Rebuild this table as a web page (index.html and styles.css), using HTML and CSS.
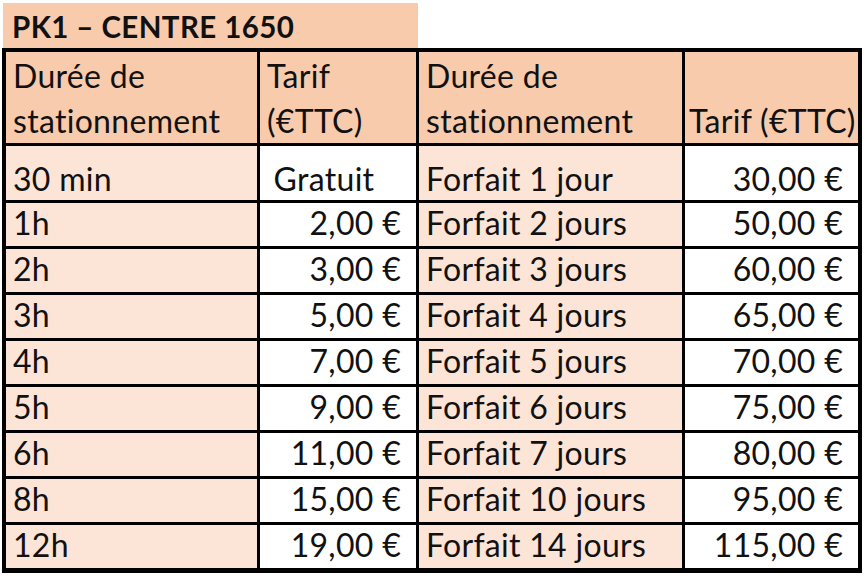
FILE: index.html
```html
<!DOCTYPE html>
<html lang="fr">
<head>
<meta charset="utf-8">
<title>PK1 – CENTRE 1650</title>
<link rel="stylesheet" href="styles.css">
</head>
<body>
<div class="sheet">
  <div class="title">PK1 – CENTRE 1650</div>
  <div class="grid">
    <div class="cell head">Durée de<br>stationnement</div>
    <div class="cell head">Tarif<br>(€TTC)</div>
    <div class="cell head">Durée de<br>stationnement</div>
    <div class="cell head narrow">Tarif (€TTC)</div>

    <div class="cell label first">30 min</div>
    <div class="cell price free first">Gratuit</div>
    <div class="cell label first">Forfait 1 jour</div>
    <div class="cell price first">30,00 €</div>

    <div class="cell label">1h</div>
    <div class="cell price">2,00 €</div>
    <div class="cell label">Forfait 2 jours</div>
    <div class="cell price">50,00 €</div>

    <div class="cell label">2h</div>
    <div class="cell price">3,00 €</div>
    <div class="cell label">Forfait 3 jours</div>
    <div class="cell price">60,00 €</div>

    <div class="cell label">3h</div>
    <div class="cell price">5,00 €</div>
    <div class="cell label">Forfait 4 jours</div>
    <div class="cell price">65,00 €</div>

    <div class="cell label">4h</div>
    <div class="cell price">7,00 €</div>
    <div class="cell label">Forfait 5 jours</div>
    <div class="cell price">70,00 €</div>

    <div class="cell label">5h</div>
    <div class="cell price">9,00 €</div>
    <div class="cell label">Forfait 6 jours</div>
    <div class="cell price">75,00 €</div>

    <div class="cell label">6h</div>
    <div class="cell price">11,00 €</div>
    <div class="cell label">Forfait 7 jours</div>
    <div class="cell price">80,00 €</div>

    <div class="cell label">8h</div>
    <div class="cell price">15,00 €</div>
    <div class="cell label">Forfait 10 jours</div>
    <div class="cell price">95,00 €</div>

    <div class="cell label">12h</div>
    <div class="cell price">19,00 €</div>
    <div class="cell label">Forfait 14 jours</div>
    <div class="cell price">115,00 €</div>
  </div>
</div>
</body>
</html>
```

FILE: styles.css
```css
html, body {
  margin: 0;
  padding: 0;
  background: #ffffff;
}

.sheet {
  padding: 3px 0 0 2px;
  font-family: Lato, "Liberation Sans", sans-serif;
  color: #111111;
}

.title {
  margin-left: 1px;
  width: 415px;
  height: 45px;
  box-sizing: border-box;
  background: #f8cbad;
  font-weight: 700;
  font-size: 29.5px;
  line-height: 40px;
  padding: 4px 0 0 9px;
  letter-spacing: 0.4px;
  white-space: nowrap;
}

.grid {
  display: grid;
  width: 860px;
  box-sizing: border-box;
  grid-template-columns: 251px 156px 263px 173px;
  grid-template-rows: 91px 54px repeat(8, 43px);
  gap: 3px;
  padding: 4px 4px 5px 4px;
  background: #000000;
  font-size: 32px;
  letter-spacing: 0.3px;
}

.cell {
  display: flex;
  flex-direction: column;
  justify-content: center;
  line-height: 45px;
  white-space: nowrap;
  padding-bottom: 5px;
  box-sizing: border-box;
}

.head {
  background: #f8cbad;
  justify-content: flex-end;
  padding: 0 4px 0 7px;
}

.head.narrow {
  padding-left: 4px;
}

.label {
  background: #fce4d6;
  padding-left: 7px;
}

.price {
  background: #ffffff;
  align-items: flex-end;
  padding-right: 15px;
}

.price.free {
  align-items: center;
  padding-right: 28px;
}

.first {
  padding-top: 10px;
  padding-bottom: 0;
}
```
